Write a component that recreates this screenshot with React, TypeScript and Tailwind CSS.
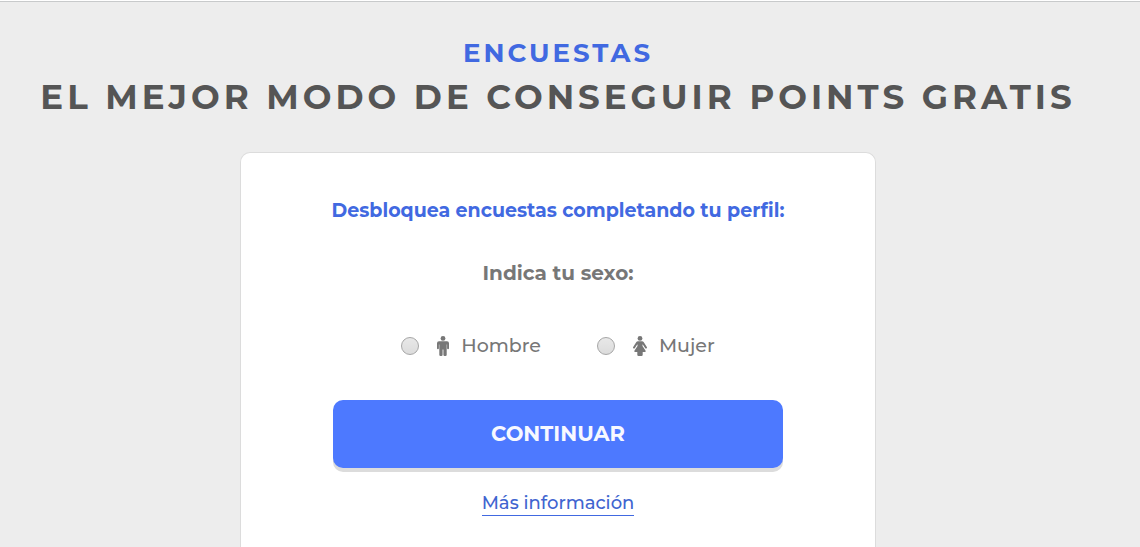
import React, { useState } from 'react';

const MaleIcon = () => (
  <svg viewBox="0 0 12 20" className="w-3 h-5 fill-current" aria-hidden="true">
    <circle cx="6" cy="2.4" r="2.4" />
    <path d="M2 5.2h8a2 2 0 0 1 2 2v5a.95.95 0 0 1-1.9 0V8.4h-.4v10.4a1.2 1.2 0 0 1-1.2 1.2h-.9a1.2 1.2 0 0 1-1.2-1.2v-5.4h-.8v5.4a1.2 1.2 0 0 1-1.2 1.2h-.9a1.2 1.2 0 0 1-1.2-1.2V8.4h-.4v3.8a.95.95 0 0 1-1.9 0v-5a2 2 0 0 1 2-2z" />
  </svg>
);

const FemaleIcon = () => (
  <svg viewBox="0 0 14 20" className="w-[14px] h-5 fill-current" aria-hidden="true">
    <circle cx="7" cy="2.4" r="2.4" />
    <path d="M5 5.2h4c.8 0 1.400.4 1.800 1l3 4.800a1 1 0 0 1-1.700 1.100L9.800 8.600h-.3v1.300l3.100 4.900a.7.7 0 0 1-.6 1.100H9.700v2.900a1.200 1.200 0 0 1-1.200 1.200h-3a1.200 1.200 0 0 1-1.200-1.200v-2.900H2a.7.7 0 0 1-.6-1.100l3.100-4.900V8.600h-.3l-2.300 3.500a1 1 0 0 1-1.700-1.100l3-4.800c.4-.6 1-1 1.800-1z" />
  </svg>
);

const options = [
  { value: 'hombre', label: 'Hombre', Icon: MaleIcon },
  { value: 'mujer', label: 'Mujer', Icon: FemaleIcon },
];

export default function App() {
  const [sexo, setSexo] = useState('');

  return (
    <div className="min-h-screen bg-white pt-px font-['Montserrat','Inter',sans-serif]">
      <main className="border-t border-[#c8cacb] bg-[#ededed] pt-[31px] pr-6 text-center">
        <header>
          <p className="text-[26px] leading-10 font-bold tracking-[3px] text-[#4169e1]">ENCUESTAS</p>
          <h1 className="text-[34px] leading-12 font-bold tracking-[4px] text-[#555]">
            EL MEJOR MODO DE CONSEGUIR POINTS GRATIS
          </h1>
        </header>

        <form
          onSubmit={e => e.preventDefault()}
          className="mt-[31px] mx-auto max-w-[636px] rounded-t-[10px] border border-b-0 border-[#dcdcdc] bg-white px-4 sm:px-20 pt-11 pb-8"
        >
          <h2 className="text-[19px] leading-7 font-bold text-[#4169e1]">
            Desbloquea encuestas completando tu perfil:
          </h2>

          <fieldset className="mt-[34px]">
            <legend className="w-full text-[20px] leading-7 font-bold text-[#777]">Indica tu sexo:</legend>
            <div className="mt-[45px] flex justify-center gap-14">
              {options.map(({ value, label, Icon }) => (
                <label key={value} className="flex items-center text-[19px] leading-7 font-medium text-[#777]">
                  <input
                    type="radio"
                    name="sexo"
                    value={value}
                    checked={sexo === value}
                    onChange={() => setSexo(value)}
                    className="mr-[18px] size-[18px] appearance-none rounded-full border border-[#a6a6a6] bg-linear-to-b from-[#e8e8e8] to-[#dcdcdc] checked:border-[5px] checked:border-[#4d79ff]"
                  />
                  <Icon />
                  <span className="ml-3">{label}</span>
                </label>
              ))}
            </div>
          </fieldset>

          <button
            type="submit"
            className="mt-10 h-[68px] w-full max-w-[450px] rounded-[10px] bg-[#4d79ff] text-[21px] font-bold text-[#f7f8ff] shadow-[0_4px_0_#dcdcdc] hover:bg-[#416cf0]"
          >
            CONTINUAR
          </button>

          <div className="mt-6">
            <a href="#info" className="inline-block border-b border-[#4169e1] text-[18px] leading-[23px] font-medium text-[#4165d0]">
              Más información
            </a>
          </div>
        </form>
      </main>
    </div>
  );
}
